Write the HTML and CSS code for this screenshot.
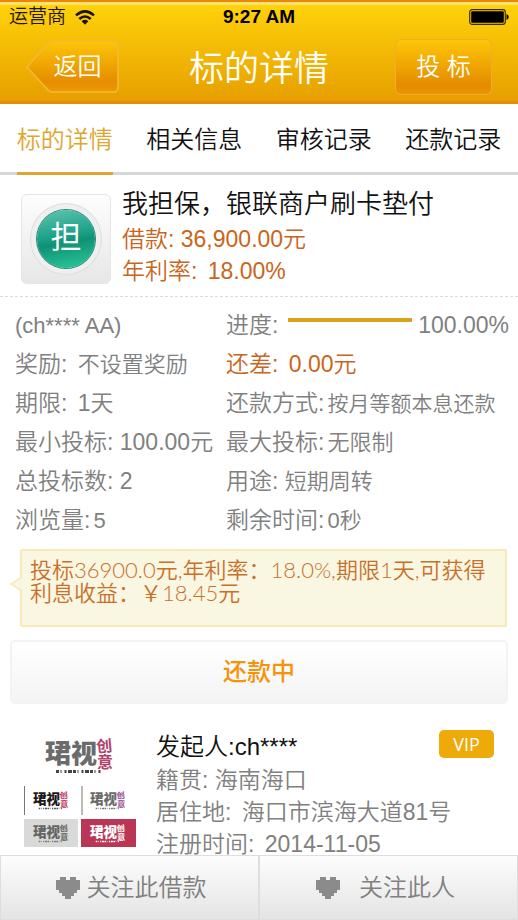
FILE: index.html
```html
<!DOCTYPE html>
<html lang="zh-CN">
<head>
<meta charset="utf-8">
<meta name="viewport" content="width=device-width, initial-scale=1">
<title>标的详情</title>
<link rel="stylesheet" href="styles.css">
</head>
<body>
<header class="header">
  <div class="status">
    <span class="carrier">运营商
      <svg class="wifi" viewBox="0 0 20 15" aria-hidden="true"><g fill="none" stroke="#1a1400" stroke-width="2.6"><path d="M1 5.4Q10-2.6 19 5.4"/><path d="M4.3 9Q10 4 15.700 9"/></g><path d="M6.600 11.200Q10 8.400 13.400 11.200L10 14.800Z" fill="#1a1400"/></svg>
    </span>
    <span class="clock">9:27 AM</span>
    <svg class="battery" viewBox="0 0 40 16" aria-hidden="true"><rect x=".7" y=".7" width="35.600" height="14.600" rx="2.500" fill="none" stroke="#3b2c00" stroke-width="1.200"/><rect x="2.200" y="2.200" width="32.600" height="11.600" rx="1" fill="#000"/><path d="M37.500 5q2.300 1 2.300 3t-2.300 3z" fill="#000"/></svg>
  </div>
  <div class="nav">
    <button class="back" type="button">
      <svg class="back-shape" viewBox="0 0 93 53" aria-hidden="true">
        <defs><linearGradient id="bg" x1="0" y1="0" x2="0" y2="1"><stop offset="0" stop-color="#fdc608"/><stop offset=".8" stop-color="#e68d00"/><stop offset="1" stop-color="#eb9b04"/></linearGradient></defs>
        <path d="M26 1H87Q92 1 92 6V47Q92 52 87 52H26Q24 52 22 50L1 27L22 3Q24 1 26 1Z" fill="url(#bg)" stroke="#f5b936" stroke-width="1.500"/>
      </svg>
      <span class="back-label">返回</span>
    </button>
    <h1 class="title">标的详情</h1>
    <button class="bid" type="button">投 标</button>
  </div>
</header>

<nav class="tabs">
  <a class="tab active" href="#detail"><span>标的详情</span></a>
  <a class="tab" href="#info"><span>相关信息</span></a>
  <a class="tab" href="#audit"><span>审核记录</span></a>
  <a class="tab" href="#repay"><span>还款记录</span></a>
</nav>

<main class="main" id="detail">
  <section class="summary">
    <div class="seal"><span class="seal-disc">担</span></div>
    <div class="summary-text">
      <h2>我担保，银联商户刷卡垫付</h2>
      <p>借款: 36,900.00元</p>
      <p>年利率: <span class="wide">18.00%</span></p>
    </div>
  </section>

  <section class="facts">
    <div class="small">(ch**** AA)</div>
    <div class="progress-row"><span>进度:</span><span class="bar"></span><span>100.00%</span></div>
    <div>奖励: <span class="small wide">不设置奖励</span></div>
    <div class="hot">还差: <span class="wide">0.00元</span></div>
    <div>期限: <span class="wide">1天</span></div>
    <div>还款方式:<span class="value compact">按月等额本息还款</span></div>
    <div>最小投标: 100.00元</div>
    <div>最大投标:<span class="value">无限制</span></div>
    <div>总投标数: 2</div>
    <div>用途: <span class="small">短期周转</span></div>
    <div>浏览量:<span class="value">5</span></div>
    <div>剩余时间:<span class="value">0秒</span></div>
  </section>

  <p class="note">投标36900.0元,年利率：18.0%,期限1天,可获得利息收益：￥18.45元
    <svg class="note-tip" viewBox="0 0 12 16" aria-hidden="true"><path d="M12 1L1 8L12 15" fill="#f9f6e1" stroke="#f9e8b8" stroke-width="1.500"/></svg>
  </p>

  <button class="state" type="button">还款中</button>

  <section class="owner">
    <svg class="logo" viewBox="0 0 112 112" role="img" aria-label="珺视创意">
      <defs>
        <g id="mark">
          <text class="mark-main" x="0" y="27">珺视</text>
          <g class="mark-side"><text x="51" y="16" transform="rotate(-5 58 9)">创</text><text x="52" y="32">意</text></g>
          <path class="mark-line" d="M11 35.500H56" stroke-width="3" stroke-dasharray="3 1.500 1 3 2 1.500 4 1"/>
        </g>
      </defs>
      <use class="m-grey" href="#mark" x="21" y="0"/>
      <path d="M.5 50V79M58 50V79" stroke="#777"/>
      <rect y="83" width="54" height="28" fill="#d9dad8"/>
      <rect x="57" y="83" width="55" height="28" fill="#b93755"/>
      <use class="m-black" href="#mark" transform="translate(9 54) scale(.52)"/>
      <use class="m-plum" href="#mark" transform="translate(66 54) scale(.52)"/>
      <use class="m-mono" href="#mark" transform="translate(9 87) scale(.52)"/>
      <use class="m-white" href="#mark" transform="translate(66 87) scale(.52)"/>
    </svg>
    <div class="owner-text">
      <h3>发起人:ch****</h3>
      <p>籍贯: 海南海口</p>
      <p>居住地: <span class="wide">海口市滨海大道81号</span></p>
      <p>注册时间: <span class="wide">2014-11-05</span></p>
    </div>
    <span class="vip">VIP</span>
  </section>
</main>

<footer class="actions">
  <button type="button"><svg class="heart" viewBox="0 0 24 22" aria-hidden="true"><path d="M4 0H10V3H14V0H20V3H24V13H21V16H18V19H15V22H9V19H6V16H3V13H0V3H4Z"/></svg>关注此借款</button>
  <button class="person" type="button"><svg class="heart" viewBox="0 0 24 22" aria-hidden="true"><path d="M4 0H10V3H14V0H20V3H24V13H21V16H18V19H15V22H9V19H6V16H3V13H0V3H4Z"/></svg>关注此人</button>
</footer>
</body>
</html>
```

FILE: styles.css
```css
* { box-sizing: border-box; }
body {
  margin: 0;
  height: 100vh;
  display: flex;
  flex-direction: column;
  background: #fff;
  color: #808080;
  font: 350 23px/32px "Liberation Sans", "Noto Sans CJK SC", sans-serif;
}
h1, h2, h3, p { margin: 0; font-weight: 350; }
button { font: inherit; border: 0; padding: 0; background: none; color: inherit; }

.header {
  flex: none;
  height: 104px;
  border-top: 2px solid #e9870a;
  border-bottom: 3px solid #e88a08;
  background: linear-gradient(#f7e36e 0 3px, #ffd20a 3px, #e69f00);
}
.status {
  display: grid;
  grid-template-columns: 1fr auto 1fr;
  align-items: center;
  height: 30px;
  padding: 0 9px;
  color: #1a1400;
  font-size: 19px;
  line-height: 30px;
}
.carrier { display: flex; align-items: center; gap: 9px; }
.wifi { width: 20px; height: 15px; }
.clock { font-weight: 700; font-size: 19px; color: #000; }
.battery { width: 40px; height: 16px; justify-self: end; }
.nav {
  display: grid;
  grid-template-columns: 1fr auto 1fr;
  align-items: center;
  height: 69px;
  padding: 0 26px;
  color: #fff;
}
.back { position: relative; width: 93px; height: 53px; }
.back-shape { position: absolute; inset: 0; width: 100%; height: 100%; }
.back-label { position: relative; padding-left: 10px; font-size: 24px; }
.title { font-size: 35px; line-height: 44px; padding-top: 4px; }
.bid {
  justify-self: end;
  width: 97px;
  height: 56px;
  border: 1px solid #eeb02c;
  border-radius: 6px;
  background: linear-gradient(#fdc608, #e58b00 85%, #e99604);
  font-size: 24px;
}

.tabs {
  flex: none;
  display: grid;
  grid-template-columns: repeat(4, 1fr);
  height: 71px;
  background: linear-gradient(#fff 68px, #d6d6d6 68px);
}
.tab {
  display: flex;
  justify-content: center;
  color: #111;
  font-size: 24px;
  line-height: 72px;
  text-decoration: none;
}
.tab.active span { color: #dfa62f; border-bottom: 3px solid #dfa62f; height: 71px; }

.main { flex: 1; min-height: 0; overflow-y: auto; scrollbar-width: none; }
.summary {
  display: flex;
  gap: 11px;
  height: 122px;
  padding: 12px 21px 0;
  border-bottom: 1px dashed #dcdcdc;
}
.seal {
  flex: none;
  display: grid;
  place-items: center;
  width: 90px;
  height: 90px;
  margin-top: 7px;
  border: 1px solid #e6e6e6;
  border-radius: 6px;
  background: linear-gradient(#fdfdfd, #e7e7e7);
}
.seal-disc {
  width: 58px;
  height: 58px;
  border-radius: 50%;
  background: linear-gradient(170deg, #5fc4b0, #1aa187 45%, #0f9174 55%, #2bcb9b);
  box-shadow: 0 0 0 1px #258a78, 0 0 0 6px #efefef, 0 0 0 7px #dedede;
  color: #fff;
  font-size: 31px;
  font-weight: 400;
  line-height: 56px;
  text-align: center;
}
.summary-text { color: #c9651c; }
.summary-text h2 { color: #111; font-size: 26px; line-height: 34px; margin-bottom: 2px; }

.facts {
  display: grid;
  grid-template-columns: 211px 1fr;
  padding: 9px 9px 0 15px;
  line-height: 39px;
  white-space: nowrap;
}
.progress-row { display: flex; }
.bar { flex: 1; height: 4px; margin: 12px 6px 0 10px; background: #dba11c; }
.hot { color: #c9651c; }
.small { font-size: 22px; }
.wide { margin-left: 4px; }
.value { margin-left: 3px; font-size: 22px; }
.compact { font-size: 21px; }

.note {
  position: relative;
  min-height: 78px;
  margin: 9px 11px 0 20px;
  padding: 7px 0 8px 8px;
  border: 2px solid #f9e8b8;
  border-radius: 2px;
  background: #f9f6e1;
  color: #c8702a;
  font-family: Lato, "Noto Sans CJK SC", sans-serif;
  font-size: 22px;
  line-height: 23px;
}
.note-tip { position: absolute; left: -12px; top: 25px; width: 12px; height: 16px; }

.state {
  display: block;
  width: calc(100% - 20px);
  height: 64px;
  margin: 13px 10px 0;
  border: 2px solid #f3f3f3;
  border-radius: 5px;
  background: linear-gradient(#fff, #f4f4f4);
  color: #f6930b;
  font-size: 24px;
  font-weight: 500;
}

.owner { display: flex; padding: 26px 24px 0; }
.logo { flex: none; width: 112px; height: 112px; margin: 6px 20px 0 0; }
.mark-main { font: 900 26px "Noto Sans CJK SC", sans-serif; }
.mark-side { font: 700 16px "Noto Sans CJK SC", sans-serif; fill: var(--side); }
.mark-line { stroke: currentColor; }
.m-grey { fill: #6b6b6b; color: #444; --side: #b3416b; }
.m-black { fill: #1d1a1b; color: #555; --side: #c2355e; }
.m-plum { fill: #6b6b6b; color: #777; --side: #9a4f93; }
.m-mono { fill: #656565; color: #777; --side: #656565; }
.m-white { fill: #fff; color: #fff; --side: #fff; }
.owner-text { flex: 1; min-width: 0; white-space: nowrap; }
.owner-text h3 { color: #111; font-size: 24px; line-height: 34px; }
.vip {
  flex: none;
  width: 55px;
  height: 28px;
  border-radius: 5px;
  background: #edaa09;
  color: #fff;
  font: 400 18px/28px "Open Sans", sans-serif;
  text-align: center;
}

.actions { flex: none; display: grid; grid-template-columns: 1fr 1fr; height: 65px; }
.actions button {
  display: flex;
  align-items: center;
  justify-content: center;
  gap: 7px;
  padding-left: 3px;
  border: 1px solid #dedede;
  background: linear-gradient(#fdfdfd, #e4e4e4);
  font-size: 24px;
}
.actions .person { gap: 19px; padding: 0 6px 0 0; }
.heart { width: 24px; height: 22px; fill: #8b8b8b; }
```
